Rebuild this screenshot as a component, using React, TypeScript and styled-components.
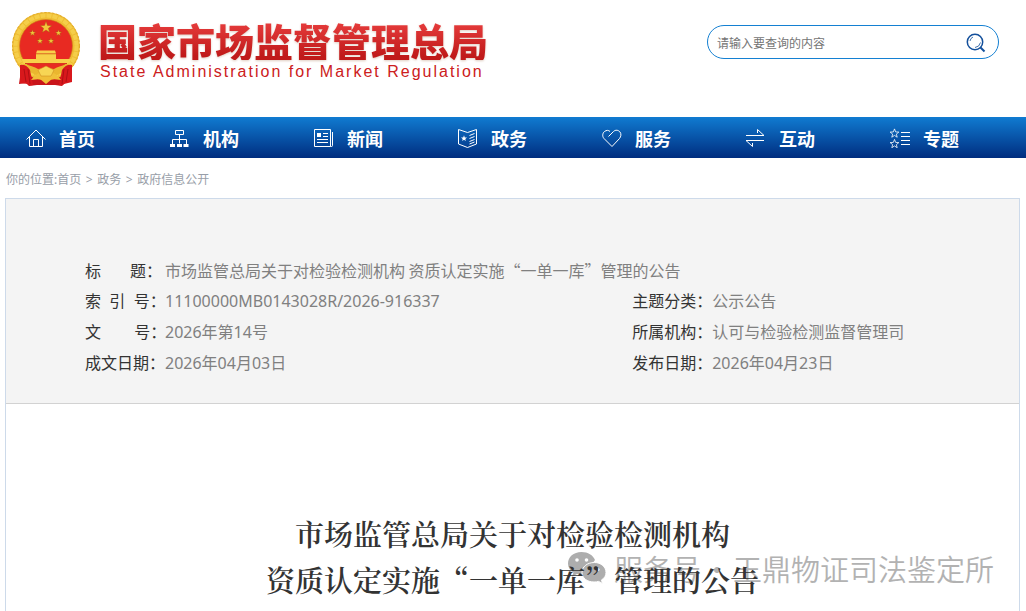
import React from 'react';
import styled, { createGlobalStyle } from 'styled-components';

const sans = '"Noto Sans", "Noto Sans CJK SC", sans-serif';
const cjk = '"Noto Sans CJK SC", sans-serif';

const GlobalStyle = createGlobalStyle`
  * { box-sizing: border-box; }
  body { margin: 0; background: #fff; color: #333; font-family: ${sans}; }
  a { color: inherit; text-decoration: none; }
`;

const Page = styled.div`
  display: flex;
  flex-direction: column;
  min-height: 100vh;
`;

const Header = styled.header`
  display: flex;
  justify-content: space-between;
  align-items: flex-start;
  height: 117px;
  padding: 10px 27px 0 9px;
`;

const Brand = styled.a`
  display: flex;
  align-items: flex-start;
  gap: 15px;
`;

const BrandText = styled.div`
  display: flex;
  flex-direction: column;
  gap: 2px;
  padding-top: 10px;
`;

const BrandName = styled.h1`
  margin: 0;
  font: 900 39px/40px ${cjk};
  white-space: nowrap;
  background: linear-gradient(#e43a3a 10%, #c01a1a 90%);
  background-clip: text;
  -webkit-background-clip: text;
  color: transparent;
  filter: drop-shadow(0 1px 1px rgba(150, 90, 50, 0.3));
`;

const BrandSub = styled.span`
  padding-left: 2px;
  font: 16px/20px "Liberation Sans", sans-serif;
  letter-spacing: 2px;
  white-space: nowrap;
  color: #cc2020;
`;

const Search = styled.form`
  display: flex;
  align-items: center;
  width: 292px;
  height: 34px;
  margin-top: 15px;
  padding: 2px 12px 0 9px;
  border: 1px solid #1480d2;
  border-radius: 17px;
`;

const SearchInput = styled.input`
  flex: 1;
  min-width: 0;
  padding: 0;
  border: 0;
  outline: 0;
  background: transparent;
  font: 12px/18px ${cjk};
  &::placeholder { color: #757575; }
`;

const SearchButton = styled.button`
  display: flex;
  padding: 0;
  border: 0;
  background: none;
`;

const Nav = styled.nav`
  display: flex;
  height: 41px;
  padding: 0 9px;
  background: linear-gradient(#107bd1, #002d7f);
`;

const NavItem = styled.a`
  flex: 1;
  display: flex;
  align-items: center;
  gap: 12px;
  padding-left: 16px;
  color: #fff;
  font: bold 18px/24px ${cjk};
`;

const NavIcon = styled.svg`
  width: 22px;
  height: 21px;
  fill: none;
  stroke: #fff;
  stroke-width: 1;
`;

const Crumbs = styled.div`
  display: flex;
  padding: 12px 6px 8px;
  font: 12px/20px ${sans};
  color: #989ea8;
`;

const Separator = styled.span`
  width: 16px;
  text-align: center;
`;

const Panel = styled.main`
  flex: 1;
  display: flex;
  flex-direction: column;
  margin: 0 6px 0 5px;
  border: 1px solid #cddaea;
  border-bottom: 0;
`;

const Info = styled.dl`
  display: grid;
  grid-template-columns: 16fr 9fr;
  margin: 0;
  padding: 56px 79px 24px;
  background: #f4f4f4;
  border-bottom: 1px solid #d2d2d2;
`;

const Field = styled.div<{ $wide?: boolean }>`
  display: flex;
  height: 31px;
  align-items: baseline;
  grid-column: ${(p) => (p.$wide ? '1 / -1' : 'auto')};
  font-size: 16px;
  line-height: 31px;
  white-space: nowrap;
`;

const Term = styled.dt`
  width: 80px;
  color: #333;
  white-space: pre;
`;

const Value = styled.dd<{ $cjk?: boolean }>`
  margin: 0;
  color: #808080;
  font-family: ${(p) => (p.$cjk ? cjk : sans)};
`;

const Article = styled.article`
  position: relative;
  flex: 1;
  padding-top: 107px;
`;

const Title = styled.h2`
  position: relative;
  margin: 0;
  text-align: center;
  font: 600 29px/46px "Noto Serif CJK SC", "Source Han Serif SC", "Noto Sans CJK SC", serif;
  color: #333;
`;

const Watermark = styled.div`
  position: absolute;
  top: 142px;
  right: 25px;
  display: flex;
  align-items: center;
  gap: 7px;
  font: 350 29px/44px ${cjk};
  color: #b2b2b2;
  white-space: nowrap;
`;

const WatermarkText = styled.span`
  display: flex;
`;

const WatermarkDot = styled.span`
  width: 32px;
  text-align: center;
`;

const star = (cx: number, cy: number, r: number) =>
  Array.from({ length: 10 }, (_, i) => {
    const a = (Math.PI / 5) * i - Math.PI / 2;
    const d = i % 2 ? r * 0.42 : r;
    return `${cx + d * Math.cos(a)},${cy + d * Math.sin(a)}`;
  }).join(' ');

const navItems: { label: string; icon: React.ReactNode }[] = [
  {
    label: '首页',
    icon: (
      <>
        <path d="M1.5 12.5 11 3l9.500 9.500" />
        <path d="M4.500 10v9.500h13V10M8.500 19.500v-7h5v7" />
      </>
    ),
  },
  {
    label: '机构',
    icon: (
      <>
        <path d="M6.500 3.500h8v4h-8zM10.500 7.500v9M3.500 17v-4.500h14V17" />
        <path d="M1 18.500h5M8 18.500h5M14.500 18.500h5" strokeWidth="3" />
      </>
    ),
  },
  {
    label: '新闻',
    icon: (
      <>
        <path d="M1.500 2.500h16v17h-16zM17.500 19.500h1q1 0 1-1V5M10 6.500h5M10 9.500h5M4 12.500h11M4 15.500h11" />
        <path d="M4 6h4v4H4z" fill="#fff" stroke="none" />
      </>
    ),
  },
  {
    label: '政务',
    icon: (
      <>
        <path d="M1.500 2.500 10.500 5.500l9-3v14.500l-9 3.500-9-3.500z" />
        <path d="m12.500 8.500 5-2M12.500 11.500l5-2M12.500 14.500l5-2M12.500 17l5-2" />
        <polygon points={star(7, 11.5, 3.2)} fill="#fff" stroke="none" />
      </>
    ),
  },
  {
    label: '服务',
    icon: (
      <path d="m7.500 9.500 5-5c2-2 5-1.500 6.500.5s1 4.500-.5 6.500L11 19.500 3 11.500C1 9.500 1.500 6 3.500 4.500s4-1.500 5.500 0" />
    ),
  },
  {
    label: '互动',
    icon: <path d="M1 8.500h18L12.500 2.500v3.500M19 13.500H1l6.500 6V16" />,
  },
  {
    label: '专题',
    icon: (
      <>
        <polygon points={star(5.5, 6.5, 4.6)} strokeWidth=".8" />
        <polygon points={star(5.5, 17, 4.6)} strokeWidth=".8" />
        <path d="M12 5.500h9M12 9.500h9M12 13.500h9M12 17.500h9" />
      </>
    ),
  },
];

const fields = [
  { term: '标       题：', value: '市场监管总局关于对检验检测机构 资质认定实施“一单一库”管理的公告', wide: true },
  { term: '索  引  号：', value: '11100000MB0143028R/2026-916337' },
  { term: '主题分类：', value: '公示公告' },
  { term: '文        号：', value: '2026年第14号' },
  { term: '所属机构：', value: '认可与检验检测监督管理司' },
  { term: '成文日期：', value: '2026年04月03日' },
  { term: '发布日期：', value: '2026年04月23日' },
];

const Emblem = () => (
  <svg width="74" height="78" viewBox="9 10 74 78" aria-hidden="true">
    <path d="M22 63 19 84l7-1 3 3 8-1h18l7 1 3-3 7-2-2-19z" fill="#c9141a" />
    <circle cx="46" cy="46" r="34" fill="#efbd34" />
    <circle cx="46" cy="46" r="30.500" fill="none" stroke="#f8d552" strokeWidth="4" strokeDasharray="5 1" strokeOpacity=".7" />
    <circle cx="46" cy="46" r="33.500" fill="none" stroke="#dfa82a" strokeWidth="1" strokeDasharray="2 2" />
    <circle cx="46" cy="46" r="26.500" fill="#e82a22" stroke="#c98218" strokeWidth=".6" />
    <g fill="#f3c63c" stroke="#a55b12" strokeWidth=".4">
      <polygon points={star(46, 27.5, 6)} />
      <polygon points={star(32.500, 33, 3.2)} />
      <polygon points={star(58.500, 33, 3.2)} />
      <polygon points={star(40, 41, 3.2)} />
      <polygon points={star(51, 41, 3.2)} />
    </g>
    <path d="M37 50.500h18l1 3H36zM36 54h20v5h15q-1 3-3 5H24q-1.500-2-2.500-5H36z" fill="#f8d14a" />
    <path d="M36 54h20" stroke="#d08a1c" strokeWidth=".7" />
    <path d="M25 63.500h42" stroke="#d9361f" strokeWidth="1" />
    <path d="M23 64q10 2 15 5l8-1 8 1q5-3 15-5l-4 7-8 4H36l-8-4z" fill="#eab62f" />
    <path d="M20 65q6-1 10 5l3 15q-3 1-5-1l-8-1zM72 65q-6-1-10 5l-3 15q3 1 5-1l8-2z" fill="#d8181c" />
    <path d="M24 69l2 13M28 69l2 15M68 69l-2 13M64 69l-2 15" stroke="#a50c12" strokeWidth=".8" />
    <path d="M31 80q6-7 8-7l7 2 7-2q3 0 8 7l-9-1-6 5-6-5z" fill="#f0bf38" />
    <path d="m38 70 8-4 8 4-3 6H41z" fill="#f7d654" stroke="#c8851b" strokeWidth=".5" />
  </svg>
);

const WechatIcon = () => (
  <svg width="40" height="34" viewBox="0 0 40 34" aria-hidden="true">
    <path d="M14.500 1C6.500 1 1 6 1 12.500c0 4 2 7 5.500 9L5 25.500l5-2.500q4 1 7 .5L28 9C26 4 21 1 14.500 1z" fill="#adadad" />
    <path d="M27.500 11.500C20 11.500 15 16 15 21.500S20 31 27 31q2.500 0 4.500-.6l4 2-1-3.500c3-1.700 4.500-4.400 4.500-7.400 0-5.500-5-10-11.500-10z" fill="#adadad" stroke="#fff" strokeWidth="1" />
    <g fill="#fff">
      <circle cx="10" cy="9" r="1.800" />
      <circle cx="19.500" cy="9" r="1.800" />
      <circle cx="23.500" cy="18.500" r="1.500" />
      <circle cx="31" cy="18.500" r="1.500" />
    </g>
  </svg>
);

export default function App() {
  return (
    <Page lang="zh-CN">
      <GlobalStyle />
      <Header>
        <Brand href="#">
          <Emblem />
          <BrandText>
            <BrandName>国家市场监督管理总局</BrandName>
            <BrandSub>State Administration for Market Regulation</BrandSub>
          </BrandText>
        </Brand>
        <Search role="search">
          <SearchInput type="text" placeholder="请输入要查询的内容" aria-label="搜索" />
          <SearchButton type="button" aria-label="查询">
            <svg width="20" height="20" viewBox="0 0 20 20" fill="none" stroke="#14509c">
              <circle cx="9" cy="9" r="7.700" strokeWidth="1.500" />
              <path d="m14.500 14.500 4 4" strokeWidth="2" />
              <path d="M4 8q.5-3 3-4M9 14.500q4.500-.5 5.500-5" strokeWidth=".8" />
            </svg>
          </SearchButton>
        </Search>
      </Header>
      <Nav>
        {navItems.map((item) => (
          <NavItem href="#" key={item.label}>
            <NavIcon viewBox="0 0 22 21" aria-hidden="true">{item.icon}</NavIcon>
            {item.label}
          </NavItem>
        ))}
      </Nav>
      <Crumbs>
        <span>你的位置:</span>
        <a href="#">首页</a>
        <Separator>&gt;</Separator>
        <a href="#">政务</a>
        <Separator>&gt;</Separator>
        <a href="#">政府信息公开</a>
      </Crumbs>
      <Panel>
        <Info>
          {fields.map((f) => (
            <Field key={f.term} $wide={f.wide}>
              <Term>{f.term}</Term>
              <Value $cjk={f.wide}>{f.value}</Value>
            </Field>
          ))}
        </Info>
        <Article>
          <Watermark>
            <WechatIcon />
            <WatermarkText>
              <span>服务号</span>
              <WatermarkDot>·</WatermarkDot>
              <span>玉鼎物证司法鉴定所</span>
            </WatermarkText>
          </Watermark>
          <Title>
            市场监管总局关于对检验检测机构
            <br />
            资质认定实施“一单一库”管理的公告
          </Title>
        </Article>
      </Panel>
    </Page>
  );
}
